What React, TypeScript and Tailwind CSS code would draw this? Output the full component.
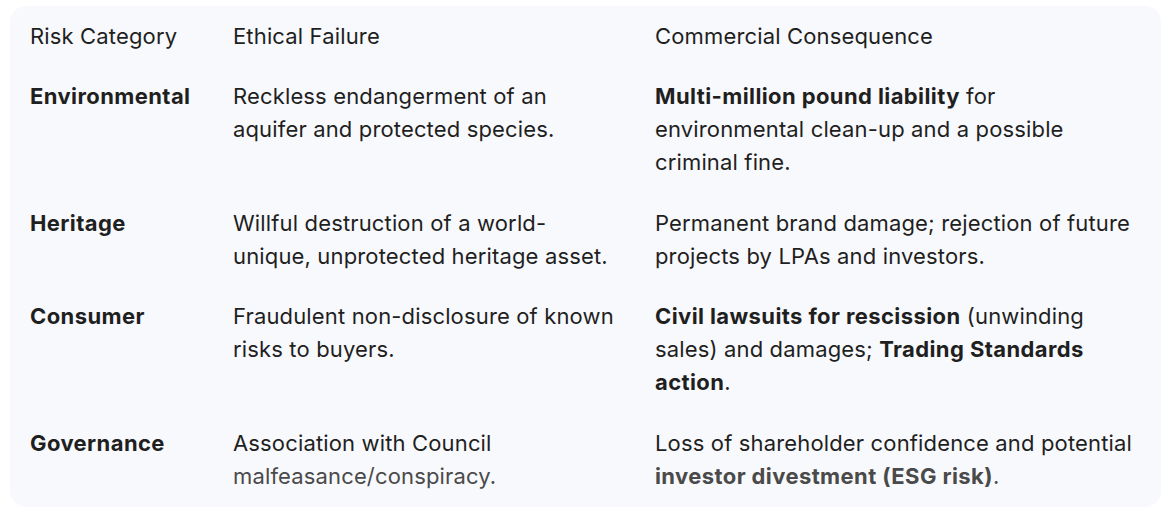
const rows = [
  {
    category: 'Environmental',
    ethical: <>Reckless endangerment of an<br />aquifer and protected species.</>,
    commercial: (
      <>
        <b className="font-bold tracking-[0.4px]">Multi-million pound liability</b> for<br />environmental clean-up and a possible<br />criminal fine.
      </>
    ),
  },
  {
    category: 'Heritage',
    ethical: <>Willful destruction of a world-<br />unique, unprotected heritage asset.</>,
    commercial: <>Permanent brand damage; rejection of future<br />projects by LPAs and investors.</>,
  },
  {
    category: 'Consumer',
    ethical: <>Fraudulent non-disclosure of known<br />risks to buyers.</>,
    commercial: (
      <>
        <b className="font-bold tracking-[0.4px]">Civil lawsuits for rescission</b> (unwinding<br />sales) and damages;{' '}
        <b className="font-bold tracking-[0.4px]">Trading Standards</b>
        <br />
        <b className="font-bold tracking-[0.4px]">action</b>.
      </>
    ),
  },
  {
    category: 'Governance',
    ethical: (
      <>
        Association with Council<br />
        <span className="text-[#4a4a4a]">malfeasance/conspiracy.</span>
      </>
    ),
    commercial: (
      <>
        Loss of shareholder confidence and potential<br />
        <span className="text-[#4a4a4a]">
          <b className="font-bold tracking-[0.4px]">investor divestment (ESG risk)</b>.
        </span>
      </>
    ),
  },
];

export default function App() {
  return (
    <div className="min-h-[512px] w-[1169px] bg-white pt-[6px] pl-[10px] font-['Inter',sans-serif] text-[22px] leading-[33px] tracking-[0.15px] text-[#1f1f1f]">
      <div className="grid w-[1151px] grid-cols-[203px_422px_1fr] rounded-2xl bg-[#f8f9fc]">
        <div className="px-5 py-[13.75px]">Risk Category</div>
        <div className="px-5 py-[13.75px]">Ethical Failure</div>
        <div className="px-5 py-[13.75px]">Commercial Consequence</div>
        {rows.map((r) => (
          <div key={r.category} className="contents">
            <div className="px-5 py-[13.75px] font-bold tracking-[0.4px]">{r.category}</div>
            <div className="px-5 py-[13.75px]">{r.ethical}</div>
            <div className="px-5 py-[13.75px]">{r.commercial}</div>
          </div>
        ))}
      </div>
    </div>
  );
}
